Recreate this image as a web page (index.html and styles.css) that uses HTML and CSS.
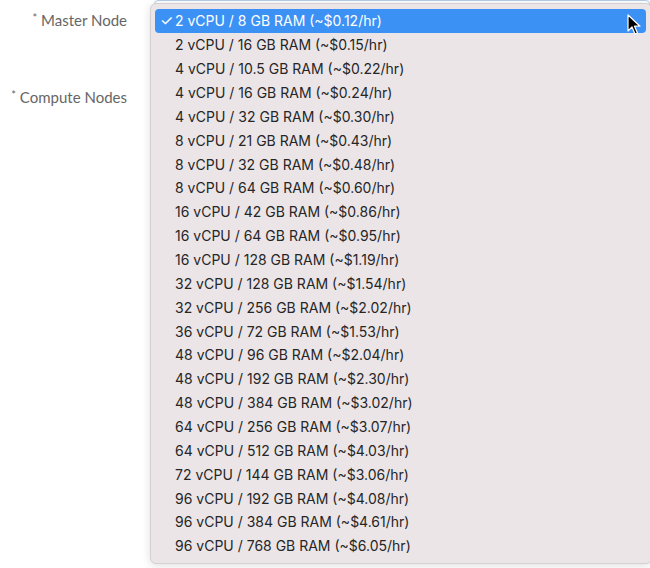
FILE: index.html
```html
<!DOCTYPE html>
<html>
<head>
<meta charset="utf-8">
<link rel="stylesheet" href="styles.css">
</head>
<body>
<form class="form">
  <div class="row">
    <label class="label"><span class="req">*</span> Master Node</label>
    <div class="field"><div class="select-box"></div></div>
  </div>
  <div class="row">
    <label class="label"><span class="req">*</span> Compute Nodes</label>
    <div class="field"></div>
  </div>
</form>
<ul class="menu">
  <li class="item selected"><span class="check">✓</span>2 vCPU / 8 GB RAM (~$0.12/hr)</li>
  <li class="item"><span class="check"></span>2 vCPU / 16 GB RAM (~$0.15/hr)</li>
  <li class="item"><span class="check"></span>4 vCPU / 10.5 GB RAM (~$0.22/hr)</li>
  <li class="item"><span class="check"></span>4 vCPU / 16 GB RAM (~$0.24/hr)</li>
  <li class="item"><span class="check"></span>4 vCPU / 32 GB RAM (~$0.30/hr)</li>
  <li class="item"><span class="check"></span>8 vCPU / 21 GB RAM (~$0.43/hr)</li>
  <li class="item"><span class="check"></span>8 vCPU / 32 GB RAM (~$0.48/hr)</li>
  <li class="item"><span class="check"></span>8 vCPU / 64 GB RAM (~$0.60/hr)</li>
  <li class="item"><span class="check"></span>16 vCPU / 42 GB RAM (~$0.86/hr)</li>
  <li class="item"><span class="check"></span>16 vCPU / 64 GB RAM (~$0.95/hr)</li>
  <li class="item"><span class="check"></span>16 vCPU / 128 GB RAM (~$1.19/hr)</li>
  <li class="item"><span class="check"></span>32 vCPU / 128 GB RAM (~$1.54/hr)</li>
  <li class="item"><span class="check"></span>32 vCPU / 256 GB RAM (~$2.02/hr)</li>
  <li class="item"><span class="check"></span>36 vCPU / 72 GB RAM (~$1.53/hr)</li>
  <li class="item"><span class="check"></span>48 vCPU / 96 GB RAM (~$2.04/hr)</li>
  <li class="item"><span class="check"></span>48 vCPU / 192 GB RAM (~$2.30/hr)</li>
  <li class="item"><span class="check"></span>48 vCPU / 384 GB RAM (~$3.02/hr)</li>
  <li class="item"><span class="check"></span>64 vCPU / 256 GB RAM (~$3.07/hr)</li>
  <li class="item"><span class="check"></span>64 vCPU / 512 GB RAM (~$4.03/hr)</li>
  <li class="item"><span class="check"></span>72 vCPU / 144 GB RAM (~$3.06/hr)</li>
  <li class="item"><span class="check"></span>96 vCPU / 192 GB RAM (~$4.08/hr)</li>
  <li class="item"><span class="check"></span>96 vCPU / 384 GB RAM (~$4.61/hr)</li>
  <li class="item"><span class="check"></span>96 vCPU / 768 GB RAM (~$6.05/hr)</li>
</ul>
<svg class="cursor" width="14" height="22" viewBox="0 0 14 22">
  <path d="M1 1 L1 17 L5 13 L8 20 L10.5 19 L7.5 12.2 L13 12.2 Z" fill="#000" stroke="#fff" stroke-width="1.2" stroke-linejoin="round"/>
</svg>
</body>
</html>
```
FILE: styles.css
```css
html, body {
  margin: 0;
  padding: 0;
  background: #ffffff;
  width: 650px;
  height: 568px;
  overflow: hidden;
}
body {
  position: relative;
  font-family: "Lato", "Open Sans", sans-serif;
}
.form {
  display: flex;
  flex-direction: column;
  gap: 53px;
  padding-top: 8px;
}
.row {
  display: flex;
  align-items: center;
  height: 24px;
}
.label {
  width: 127px;
  text-align: right;
  font-size: 15px;
  color: #666666;
  flex: none;
}
.req {
  font-size: 11px;
  vertical-align: 4px;
}
.field {
  flex: 1;
  margin-left: 27px;
}
.select-box {
  height: 32px;
  margin-top: -6px;
  border: 1px solid #b4cde6;
  border-radius: 4px;
}
.menu {
  position: absolute;
  left: 150px;
  top: 3px;
  width: 502px;
  margin: 0;
  padding: 5px 0 5px 0;
  list-style: none;
  background: #ebe5e8;
  border: 1px solid #d4d0d2;
  border-radius: 6px;
  box-sizing: border-box;
  box-shadow: 0 2px 10px rgba(0, 0, 0, 0.12);
  font-family: "Inter", "Noto Sans", sans-serif;
  font-size: 14px;
  color: #262626;
}
.item {
  display: flex;
  align-items: center;
  height: 23.86px;
  margin: 0 5px 0 4px;
  padding-left: 5px;
  border-radius: 4px;
  white-space: nowrap;
}
.check {
  width: 15px;
  flex: none;
  font-size: 15px;
}
.selected {
  background: #3c91f5;
  color: #ffffff;
}
.cursor {
  position: absolute;
  left: 627px;
  top: 14px;
}
```
